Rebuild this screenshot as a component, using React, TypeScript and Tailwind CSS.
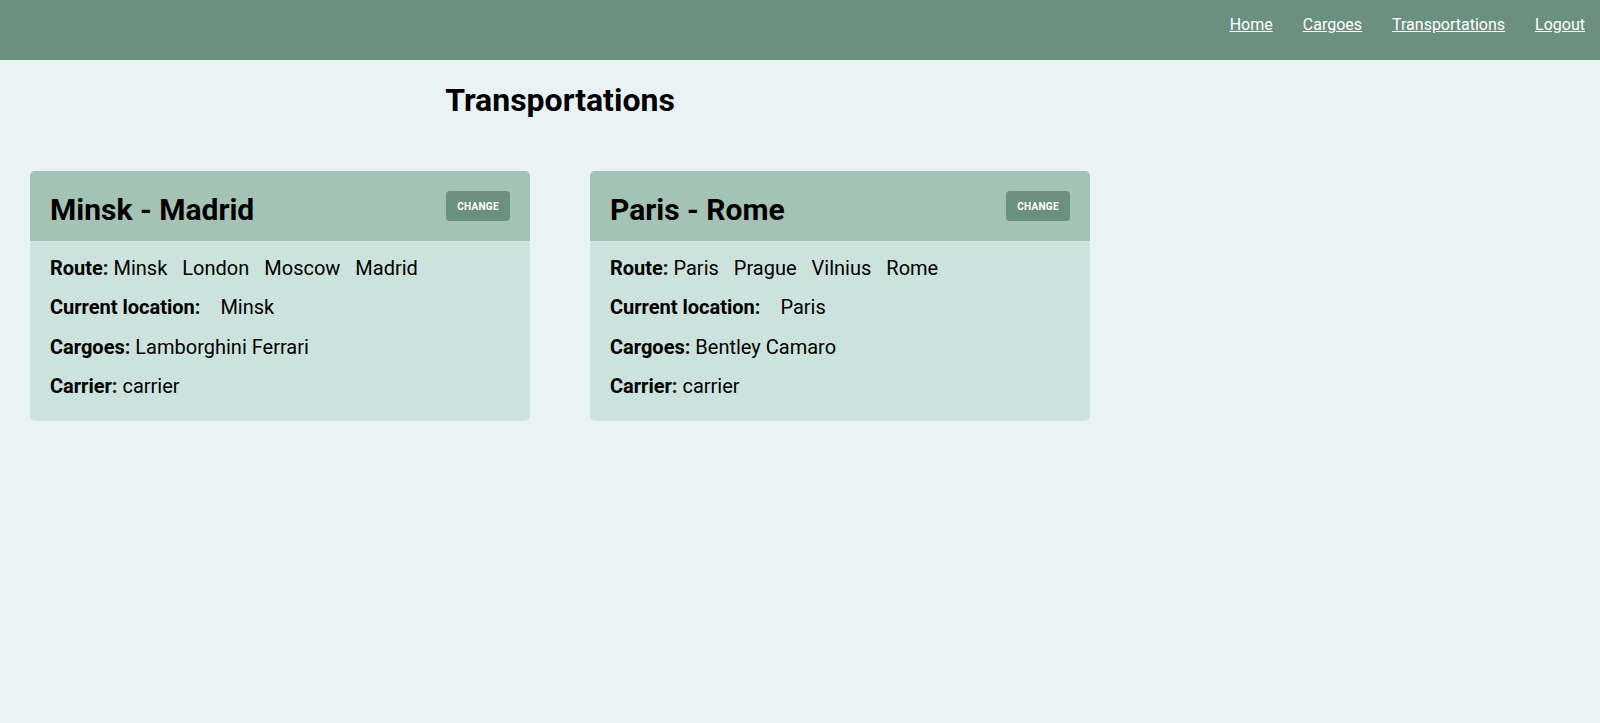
import React from 'react';

type Transportation = {
  id: number;
  title: string;
  route: string[];
  currentLocation: string;
  cargoes: string[];
  carrier: string;
};

const transportations: Transportation[] = [
  {
    id: 1,
    title: 'Minsk - Madrid',
    route: ['Minsk', 'London', 'Moscow', 'Madrid'],
    currentLocation: 'Minsk',
    cargoes: ['Lamborghini', 'Ferrari'],
    carrier: 'carrier',
  },
  {
    id: 2,
    title: 'Paris - Rome',
    route: ['Paris', 'Prague', 'Vilnius', 'Rome'],
    currentLocation: 'Paris',
    cargoes: ['Bentley', 'Camaro'],
    carrier: 'carrier',
  },
];

function Header() {
  const links = ['Home', 'Cargoes', 'Transportations', 'Logout'];
  return (
    <header className="flex h-[60px] items-start justify-end gap-[30px] bg-[#6b907f] pt-[15px] pr-[15px]">
      {links.map((l) => (
        <a key={l} href="#" className="text-[16px] leading-[19px] text-white underline">
          {l}
        </a>
      ))}
    </header>
  );
}

function TransportationCard({ t }: { t: Transportation }) {
  return (
    <div className="w-[500px] overflow-hidden rounded-[5px] bg-[#cce3dd]">
      <div className="flex h-[70px] items-center justify-between bg-[#a5c3b4] px-5">
        <h2 className="mt-[6px] text-[30px] leading-[35px] font-bold text-black">{t.title}</h2>
        <button className="h-[30px] w-[64px] rounded-[4px] bg-[#6b907f] text-[10px] font-bold tracking-[0.3px] text-white">
          CHANGE
        </button>
      </div>
      <div className="flex flex-col gap-[16px] px-5 pt-[15.5px] pb-[22px] text-[20px] leading-[23.5px] text-black">
        <p>
          <b>Route:</b>{' '}
          {t.route.map((city) => (
            <span key={city} className="mr-[15px]">
              {city}
            </span>
          ))}
        </p>
        <p>
          <b className="mr-[15px]">Current location:</b> {t.currentLocation}
        </p>
        <p>
          <b>Cargoes:</b> {t.cargoes.join(' ')}
        </p>
        <p>
          <b>Carrier:</b> {t.carrier}
        </p>
      </div>
    </div>
  );
}

export default function App() {
  return (
    <div className="min-h-[723px] bg-[#eaf3f4] font-['Roboto',sans-serif]">
      <Header />
      <main className="w-[1120px]">
        <h1 className="mt-[22px] text-center text-[32px] leading-[37px] font-bold text-black">
          Transportations
        </h1>
        <div className="mt-[52px] flex gap-[60px] px-[30px]">
          {transportations.map((t) => (
            <TransportationCard key={t.id} t={t} />
          ))}
        </div>
      </main>
    </div>
  );
}
